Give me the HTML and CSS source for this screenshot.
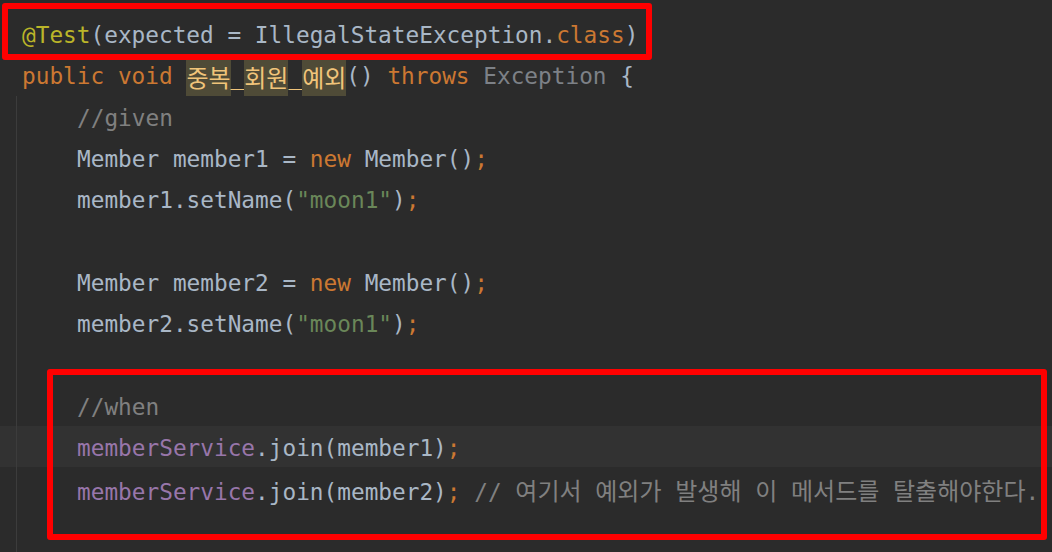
FILE: index.html
```html
<!DOCTYPE html>
<html lang="ko">
<head>
    <meta charset="UTF-8">
    <meta name="viewport" content="width=device-width, initial-scale=1.0">
    <title>MemberServiceTest</title>
    <link rel="stylesheet" href="styles.css">
</head>
<body>
    <div class="editor">
        <div class="line"><span class="ann">@Test</span>(expected = IllegalStateException.<span class="kw">class</span>)</div>
        <div class="line"><span class="kw">public void </span><span class="fn"><span class="mark ko">중복</span>_<span class="mark ko">회원</span>_<span class="mark ko">예외</span></span>() <span class="kw">throws </span><span class="dim">Exception</span> {</div>
        <div class="block">
            <div class="line"><span class="cm">//given</span></div>
            <div class="line">Member member1 = <span class="kw">new </span>Member()<span class="kw">;</span></div>
            <div class="line">member1.setName(<span class="str">"moon1"</span>)<span class="kw">;</span></div>
            <div class="line"></div>
            <div class="line">Member member2 = <span class="kw">new </span>Member()<span class="kw">;</span></div>
            <div class="line">member2.setName(<span class="str">"moon1"</span>)<span class="kw">;</span></div>
            <div class="line"></div>
            <div class="line"><span class="cm">//when</span></div>
            <div class="line current"><span class="field">memberService</span>.join(member1)<span class="kw">;</span></div>
            <div class="line"><span class="field">memberService</span>.join(member2)<span class="kw">;</span> <span class="cm">// <span class="ko">여기서</span> <span class="ko">예외가</span> <span class="ko">발생해</span> <span class="ko">이</span> <span class="ko">메서드를</span> <span class="ko">탈출해야한다</span>.</span></div>
            <div class="line"></div>
        </div>

        <!-- red markers drawn over the code -->
        <div class="mark-box box-top"></div>
        <div class="mark-box box-when"></div>
    </div>
</body>
</html>
```

FILE: styles.css
```css
body {
    margin: 0;
    background-color: #2b2b2b;
    overflow: hidden;
}
.editor {
    position: relative;
    width: 1052px;
    height: 552px;
    padding-top: 13px;
    box-sizing: border-box;
    font-family: "DejaVu Sans Mono", "Noto Sans CJK KR", monospace;
    font-size: 22.75px;
    color: #a9b7c6;
}
.line {
    height: 41.3px;
    line-height: 37.3px;
    padding-top: 4px;
    padding-left: 22px;
    box-sizing: border-box;
    white-space: pre;
}
.block {
    position: relative;
}
.block .line {
    padding-left: 77px;
}
.block::before {
    content: "";
    position: absolute;
    left: 16px;
    top: 0;
    bottom: -10px;
    width: 1px;
    background-color: #3c3c3c;
    z-index: 1;
}
.current {
    background-color: #323232;
}
.kw {
    color: #cc7832;
}
.ann {
    color: #bbb529;
}
.fn {
    color: #f0c47a;
}
.mark {
    display: inline-block;
    vertical-align: top;
    margin-top: -4px;
    height: 41.3px;
    line-height: 45.3px;
    background-color: #4f4b37;
}
.ko {
    font-family: "Noto Sans CJK KR", sans-serif;
    font-size: 24px;
}
.dim {
    color: #7d8187;
}
.cm {
    color: #808080;
}
.str {
    color: #6a8759;
}
.field {
    color: #9876aa;
}
.mark-box {
    position: absolute;
    border: 6px solid #ff0000;
    border-radius: 3px;
    box-sizing: border-box;
    z-index: 2;
}
.box-top {
    left: 2px;
    top: 3px;
    width: 650px;
    height: 57px;
}
.box-when {
    left: 47px;
    top: 369px;
    width: 1000px;
    height: 171px;
}
```
